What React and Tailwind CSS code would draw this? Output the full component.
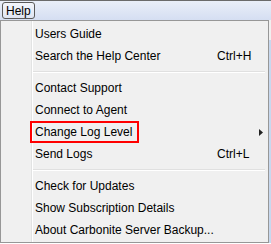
const items = [
  { label: 'Users Guide' },
  { label: 'Search the Help Center', shortcut: 'Ctrl+H' },
  { sep: true },
  { label: 'Contact Support' },
  { label: 'Connect to Agent' },
  { label: 'Change Log Level', sub: true, marked: true },
  { label: 'Send Logs', shortcut: 'Ctrl+L' },
  { sep: true },
  { label: 'Check for Updates' },
  { label: 'Show Subscription Details' },
  { label: 'About Carbonite Server Backup...' },
];

export default function App() {
  return (
    <div className="w-[271px] h-[244px] bg-white text-[12px] text-black overflow-hidden" style={{ fontFamily: '"Liberation Sans", Arial, sans-serif' }}>
      {/* menu bar */}
      <div className="h-[20px] border-t border-[#6b6b6b] bg-gradient-to-b from-[#eaeff9] to-[#d5def2] flex items-start pl-[2px] pt-[1px]">
        <div className="h-[17px] px-[3px] rounded-[3px] border border-[#5a5a5a] bg-gradient-to-b from-[#f4f6fb] to-[#dfe5f3] flex items-center leading-none">
          Help
        </div>
      </div>
      <div className="flex">
        {/* dropdown */}
        <div className="w-[269px] h-[223px] border border-[#979797] bg-[#f0f0f0] relative pt-[2px]">
          <div className="absolute left-[30px] top-0 bottom-0 w-[2px] flex">
            <div className="w-px bg-[#e2e3e3]" />
            <div className="w-px bg-white" />
          </div>
          {items.map((it, i) =>
            it.sep ? (
              <div key={i} className="h-[10px] flex items-center pl-[32px] pr-[3px]">
                <div className="w-full">
                  <div className="h-px bg-[#e0e0e0]" />
                  <div className="h-px bg-white" />
                </div>
              </div>
            ) : (
              <div key={i} className="h-[22px] flex items-center relative">
                {it.marked && (
                  <div className="absolute left-[29px] top-0 w-[109px] h-[22px] border-2 border-[#ff0000]" />
                )}
                <span className="pl-[34px] flex-1">{it.label}</span>
                {it.shortcut && <span className="w-[51px]">{it.shortcut}</span>}
                {it.sub && (
                  <svg width="4" height="7" viewBox="0 0 4 7" className="mr-[5px]">
                    <path d="M0 0L4 3.5L0 7Z" fill="#222" />
                  </svg>
                )}
              </div>
            )
          )}
        </div>
        <div className="w-[2px] h-[223px] flex flex-col">
          <div className="h-[20px] bg-[#f0f0f0]" />
          <div className="flex-1 bg-[#c8d8ee]" />
        </div>
      </div>
    </div>
  );
}
